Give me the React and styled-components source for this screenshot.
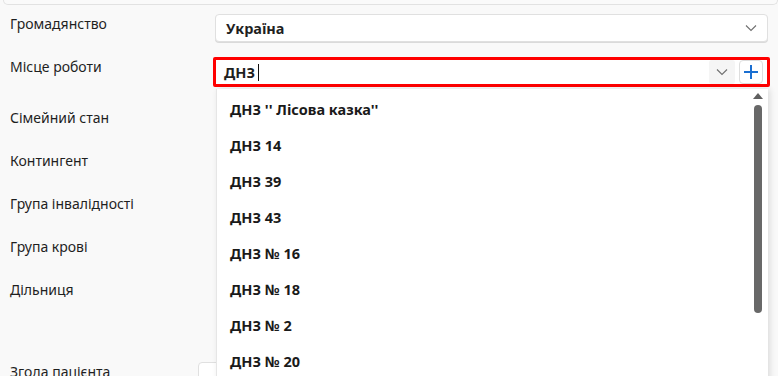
import styled, { createGlobalStyle } from "styled-components";

const GlobalStyle = createGlobalStyle`
  html, body {
    margin: 0;
    padding: 0;
    background: #f9f9f9;
    font-family: "Noto Sans", "Open Sans", sans-serif;
    color: #1f1f1f;
  }
`;

const Page = styled.div`
  position: relative;
  width: 778px;
  height: 376px;
  overflow: hidden;
  background: #f9f9f9;
`;

const TopCard = styled.div`
  height: 4px;
  margin-left: 3px;
  border: 1px solid #e2e2e2;
  border-top: none;
  border-radius: 0 0 6px 6px;
  background: #fafafa;
`;

const Form = styled.div`
  display: flex;
  flex-direction: column;
  padding: 9px 10px 0 10px;
`;

const Row = styled.div`
  display: grid;
  grid-template-columns: 205px 1fr;
  height: ${({ $h }) => $h}px;
`;

const Label = styled.div`
  font-size: 14px;
  line-height: 20px;
`;

const Select = styled.div`
  display: flex;
  align-items: center;
  height: 26px;
  padding: 0 10px;
  background: #fff;
  border: 1px solid #e0e0e0;
  border-radius: 4px;
  font-size: 14.5px;
  font-weight: 700;
  box-shadow: 0 1px 0 #dadada;
`;

const SelectText = styled.span`
  flex: 1;
`;

const Chevron = () => (
  <svg width="12" height="8" viewBox="0 0 12 8">
    <path d="M1 1.5l5 5 5-5" fill="none" stroke="#6f6f6f" strokeWidth="1.1" />
  </svg>
);

const ComboBox = styled.div`
  display: flex;
  align-items: center;
  height: 24px;
  margin: 0 -2px;
  padding: 0 4px 0 8px;
  background: #fff;
  border: 3px solid #ff0000;
  border-radius: 2px;
  font-size: 14.5px;
  font-weight: 700;
`;

const Caret = styled.span`
  display: inline-block;
  width: 1px;
  height: 17px;
  margin-left: 3px;
  background: #111;
`;

const Typed = styled.div`
  flex: 1;
  display: flex;
  align-items: center;
`;

const DropButton = styled.div`
  display: flex;
  align-items: center;
  justify-content: center;
  width: 26px;
  height: 24px;
  background: #f5f5f5;
  border-radius: 3px;
`;

const AddButton = styled.div`
  display: flex;
  align-items: center;
  justify-content: center;
  width: 22px;
  height: 22px;
  margin-left: 4px;
  background: #fff;
  border: 1px solid #dedede;
  border-radius: 4px;
`;

const PlainField = styled.div`
  height: 28px;
  margin-left: -17px;
  width: 40px;
  background: #fff;
  border: 1px solid #e0e0e0;
  border-radius: 4px;
`;

const Dropdown = styled.div`
  position: absolute;
  left: 216px;
  top: 89px;
  right: 10px;
  bottom: -20px;
  display: flex;
  background: #fff;
  border-left: 1px solid #e6e6e6;
  box-shadow: 2px 0 6px rgba(0, 0, 0, 0.12);
`;

const Options = styled.div`
  flex: 1;
  padding-top: 2px;
`;

const Option = styled.div`
  height: 36px;
  display: flex;
  align-items: center;
  padding-left: 13px;
  font-size: 14.5px;
  font-weight: 700;
  color: #1a1a1a;
`;

const ScrollTrack = styled.div`
  width: 8px;
  margin: 4px 6px 0 0;
  display: flex;
  flex-direction: column;
  align-items: center;
  gap: 6px;
`;

const ArrowUp = styled.div`
  width: 0;
  height: 0;
  border-left: 5px solid transparent;
  border-right: 5px solid transparent;
  border-bottom: 6px solid #606060;
`;

const Thumb = styled.div`
  width: 8px;
  height: 208px;
  background: #686868;
  border-radius: 4px;
`;

const Plus = () => (
  <svg width="14" height="14" viewBox="0 0 14 14">
    <path d="M7 0v14M0 7h14" stroke="#1a6fd1" strokeWidth="2" />
  </svg>
);

const options = [
  "ДНЗ '' Лісова казка''",
  "ДНЗ 14",
  "ДНЗ 39",
  "ДНЗ 43",
  "ДНЗ № 16",
  "ДНЗ № 18",
  "ДНЗ № 2",
  "ДНЗ № 20",
];

const App = () => {
  return (
    <Page>
      <GlobalStyle />
      <TopCard />
      <Form>
        <Row $h={43}>
          <Label>Громадянство</Label>
          <Select>
            <SelectText>Україна</SelectText>
            <Chevron />
          </Select>
        </Row>
        <Row $h={51}>
          <Label>Місце роботи</Label>
          <ComboBox>
            <Typed>
              ДНЗ
              <Caret />
            </Typed>
            <DropButton>
              <Chevron />
            </DropButton>
            <AddButton>
              <Plus />
            </AddButton>
          </ComboBox>
        </Row>
        <Row $h={43}>
          <Label>Сімейний стан</Label>
        </Row>
        <Row $h={43}>
          <Label>Контингент</Label>
        </Row>
        <Row $h={43}>
          <Label>Група інвалідності</Label>
        </Row>
        <Row $h={43}>
          <Label>Група крові</Label>
        </Row>
        <Row $h={82}>
          <Label>Дільниця</Label>
        </Row>
        <Row $h={40}>
          <Label>Згода пацієнта</Label>
          <PlainField />
        </Row>
      </Form>
      <Dropdown>
        <Options>
          {options.map((o) => (
            <Option key={o}>{o}</Option>
          ))}
        </Options>
        <ScrollTrack>
          <ArrowUp />
          <Thumb />
        </ScrollTrack>
      </Dropdown>
    </Page>
  );
};

export default App;
